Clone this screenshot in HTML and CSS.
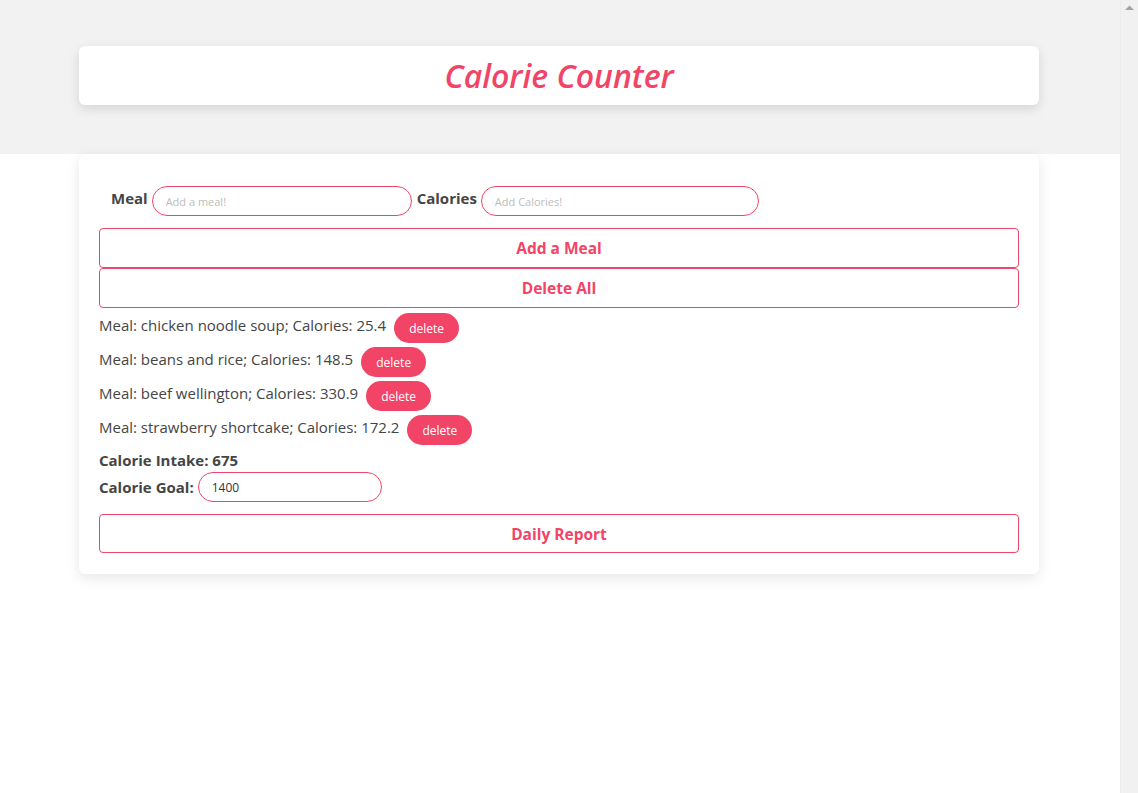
FILE: index.html
```html
<!DOCTYPE html>
<html lang="en">
<head>
<meta charset="utf-8">
<title>Calorie Counter</title>
<link rel="stylesheet" href="styles.css">
</head>
<body>
<div class="window">
  <div class="page">
    <header class="top">
      <div class="title-card">
        <h1 class="title">Calorie Counter</h1>
      </div>
    </header>
    <main class="card">
      <div class="form-row">
        <label class="label" for="meal">Meal</label>
        <input id="meal" class="pill-input meal-input" type="text" placeholder="Add a meal!">
        <label class="label" for="cal">Calories</label>
        <input id="cal" class="pill-input cal-input" type="text" placeholder="Add Calories!">
      </div>
      <button class="wide-btn">Add a Meal</button>
      <button class="wide-btn">Delete All</button>
      <ul class="meals">
        <li class="meal"><span class="meal-text">Meal: chicken noodle soup; Calories: 25.4</span><button class="del">delete</button></li>
        <li class="meal"><span class="meal-text">Meal: beans and rice; Calories: 148.5</span><button class="del">delete</button></li>
        <li class="meal"><span class="meal-text">Meal: beef wellington; Calories: 330.9</span><button class="del">delete</button></li>
        <li class="meal"><span class="meal-text">Meal: strawberry shortcake; Calories: 172.2</span><button class="del">delete</button></li>
      </ul>
      <div class="intake">Calorie Intake: 675</div>
      <div class="goal">
        <label class="goal-label" for="goal">Calorie Goal:</label>
        <input id="goal" class="pill-input goal-input" type="text" value="1400">
      </div>
      <button class="wide-btn report">Daily Report</button>
    </main>
  </div>
  <div class="scrollbar" aria-hidden="true">
    <svg class="scroll-arrow" width="17" height="17" viewBox="0 0 17 17"><path d="M4 10 L8.5 5.5 L13 10 Z" fill="#a3a3a3"/></svg>
  </div>
</div>
</body>
</html>
```

FILE: styles.css
```css
html, body {
  margin: 0;
  height: 100%;
  overflow: hidden;
}
body {
  background: #ffffff;
  font-family: "Open Sans", "Noto Sans", sans-serif;
  color: #454545;
}
.window {
  display: flex;
  height: 100%;
}
.page {
  flex: 1;
  min-width: 0;
}
.scrollbar {
  width: 18px;
  flex: none;
  background: #f1f1f1;
  border-left: 1px solid #ececec;
  box-sizing: border-box;
}
.scroll-arrow {
  display: block;
}
.top {
  background: #f2f2f2;
  padding: 46px 0 49px;
}
.title-card {
  width: 960px;
  margin-left: calc(50% - 481px);
  background: #fff;
  border-radius: 6px;
  box-shadow: 0 4px 12px rgba(0, 0, 0, 0.12);
  height: 59px;
  display: flex;
  align-items: center;
  justify-content: center;
}
.title {
  margin: 0;
  font-size: 32px;
  font-style: italic;
  font-weight: 600;
  color: #f24467;
}
.card {
  width: 920px;
  margin-left: calc(50% - 481px);
  background: #fff;
  border-radius: 6px;
  box-shadow: 0 4px 14px rgba(0, 0, 0, 0.10);
  padding: 32px 20px 21px;
}
.form-row {
  display: flex;
  align-items: flex-start;
  padding-left: 12px;
  margin-bottom: 12px;
}
.label {
  font-weight: 700;
  font-size: 15px;
  line-height: 25px;
  margin-right: 4px;
}
.pill-input {
  box-sizing: border-box;
  height: 30px;
  border: 1px solid #f24467;
  border-radius: 15px;
  padding: 0 13px;
  font-family: inherit;
  font-size: 11px;
  color: #333;
  outline: none;
  background: #fff;
}
.pill-input::placeholder {
  color: #bdbdbd;
}
.meal-input {
  width: 260px;
  margin-right: 5px;
}
.cal-input {
  width: 278px;
}
.wide-btn {
  display: block;
  box-sizing: border-box;
  width: 100%;
  height: 40px;
  background: #fff;
  border: 1px solid #f24467;
  border-radius: 4px;
  color: #f24467;
  font-family: inherit;
  font-weight: 700;
  font-size: 15.5px;
  cursor: pointer;
}
.meals {
  list-style: none;
  margin: 3px 0 0;
  padding: 0;
}
.meal {
  height: 34px;
  display: flex;
  align-items: flex-start;
}
.meal-text {
  font-size: 15px;
  line-height: 28px;
}
.del {
  margin: 2px 0 0 8px;
  width: 65px;
  height: 30px;
  border: none;
  border-radius: 15px;
  background: #f24467;
  color: #fff;
  font-family: inherit;
  font-size: 12px;
  cursor: pointer;
}
.intake {
  font-weight: 700;
  font-size: 15px;
  margin-top: 3px;
  line-height: 20px;
}
.goal {
  display: flex;
  align-items: center;
  margin-top: 2px;
}
.goal-label {
  font-weight: 700;
  font-size: 15px;
  margin-right: 4px;
}
.goal-input {
  width: 184px;
  height: 30px;
  font-size: 12px;
}
.report {
  margin-top: 12px;
  height: 39px;
}
```
